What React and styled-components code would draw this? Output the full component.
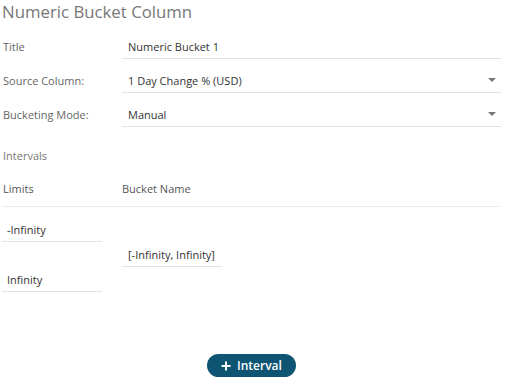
import React from 'react';
import styled, { createGlobalStyle } from 'styled-components';

const GlobalStyle = createGlobalStyle`
  body {
    margin: 0;
    background: #fff;
    font-family: "Open Sans", "Noto Sans", sans-serif;
  }
`;

const Page = styled.div`
  width: 508px;
  height: 388px;
  box-sizing: border-box;
  padding: 0 7px 0 2px;
  display: flex;
  flex-direction: column;
`;

const Heading = styled.div`
  height: 34px;
  padding-top: 1px;
  box-sizing: border-box;
  font-size: 16.8px;
  line-height: 22px;
  color: #777;
`;

const Form = styled.div`
  display: grid;
  grid-template-columns: 120px 1fr;
  grid-auto-rows: 25px;
  row-gap: 9px;
`;

const Label = styled.div`
  display: flex;
  align-items: center;
  padding-left: 1px;
  font-size: 11px;
  color: #666;
`;

const Field = styled.div`
  position: relative;
  display: flex;
  align-items: center;
  box-sizing: border-box;
  width: ${p => p.$width || 'auto'};
  height: 25px;
  padding-left: ${p => p.$pad || '6px'};
  border-bottom: 1px solid #e2e2e2;
  font-size: 11px;
  color: #333;
`;

const Caret = styled.span`
  position: absolute;
  right: 5px;
  top: 10px;
  width: 0;
  height: 0;
  border-left: 4px solid transparent;
  border-right: 4px solid transparent;
  border-top: 4px solid #777;
`;

const Section = styled.div`
  height: 44px;
  box-sizing: border-box;
  padding: 21px 0 0 1px;
  line-height: 16px;
  font-size: 11px;
  color: #777;
`;

const HeaderRow = styled.div`
  display: grid;
  grid-template-columns: 120px 1fr;
  height: 35px;
  align-items: center;
  border-bottom: 1px solid #ececec;
  font-size: 11px;
  color: #555;
  & > div { padding-left: 1px; }
  & > div + div { padding-left: 0; }
`;

const Body = styled.div`
  display: flex;
  align-items: center;
  gap: 20px;
  padding-top: 10px;
`;

const LimitColumn = styled.div`
  display: flex;
  flex-direction: column;
  gap: 25px;
`;

const Footer = styled.div`
  display: flex;
  justify-content: center;
  margin-top: 62px;
`;

const AddButton = styled.button`
  display: flex;
  align-items: center;
  gap: 6px;
  height: 23px;
  padding: 0 14px 0 14px;
  border: none;
  border-radius: 12px;
  background: #0e5573;
  color: #fff;
  font-family: inherit;
  font-size: 12px;
  font-weight: 600;
  cursor: pointer;
`;

function Plus() {
  return (
    <svg width="10" height="10" viewBox="0 0 10 10">
      <path d="M5 0.5v9M0.5 5h9" stroke="#fff" strokeWidth="2" />
    </svg>
  );
}

function App() {
  return (
    <Page>
      <GlobalStyle />
      <Heading>Numeric Bucket Column</Heading>
      <Form>
        <Label>Title</Label>
        <Field>Numeric Bucket 1</Field>
        <Label>Source Column:</Label>
        <Field>1 Day Change % (USD)<Caret /></Field>
        <Label>Bucketing Mode:</Label>
        <Field>Manual<Caret /></Field>
      </Form>
      <Section>Intervals</Section>
      <HeaderRow>
        <div>Limits</div>
        <div>Bucket Name</div>
      </HeaderRow>
      <Body>
        <LimitColumn>
          <Field $width="100px" $pad="5px">-Infinity</Field>
          <Field $width="100px" $pad="5px">Infinity</Field>
        </LimitColumn>
        <Field $width="100px">[-Infinity, Infinity]</Field>
      </Body>
      <Footer>
        <AddButton><Plus />Interval</AddButton>
      </Footer>
    </Page>
  );
}

export default App;
